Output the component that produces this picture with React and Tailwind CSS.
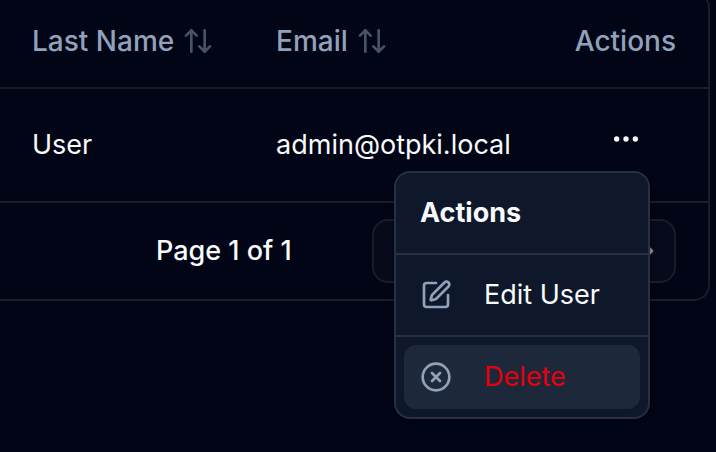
// USERS TABLE - Sortable user list with pagination and the row actions menu

import React from "react";
import {
  ArrowUpDown,
  ChevronLeft,
  ChevronRight,
  ChevronsLeft,
  ChevronsRight,
  CircleX,
  MoreHorizontal,
  SquarePen,
} from "lucide-react";

/**
 * SortHeader Component
 * @param {String} label - Column title, shown next to the sort arrows
 */
const SortHeader = ({ label }) => (
  <button type="button" className="flex items-center gap-2 font-medium">
    {label}
    <ArrowUpDown className="size-8 opacity-50" />
  </button>
);

/**
 * MenuItem Component
 * @param {Component} icon    - Lucide icon
 * @param {String}  label     - Item text
 * @param {Boolean} isActive  - Whether the item is highlighted
 * @param {Boolean} isDanger  - Whether the action is destructive
 */
const MenuItem = ({ icon: Icon, label, isActive = false, isDanger = false }) => (
  <div className="p-2">
    <button
      type="button"
      role="menuitem"
      className={`
        flex w-full items-center gap-8 rounded-xl px-4 py-3
        ${isActive ? "bg-[#1d293b]" : ""}
        ${isDanger ? "text-[#e7000b]" : "text-slate-50"}
      `}
    >
      <Icon className="size-8 text-slate-400" />
      {label}
    </button>
  </div>
);

/* Row actions menu, hangs from the "..." button */
const ActionsMenu = () => (
  <div
    role="menu"
    className="absolute top-full right-0 z-10 w-64 divide-y-2 divide-[#272f40] rounded-2xl border-2 border-[#272f40] bg-[#0f172b] text-left shadow-md"
  >
    <div className="px-6 py-5 font-bold">Actions</div>
    <MenuItem icon={SquarePen} label="Edit User" />
    <MenuItem icon={CircleX} label="Delete" isActive isDanger />
  </div>
);

const PageButton = ({ icon: Icon, label }) => (
  <button
    type="button"
    aria-label={label}
    disabled
    className="flex size-16 items-center justify-center rounded-2xl border-2 border-[#1a1c2c] bg-[#070a1a] text-slate-50/50"
  >
    <Icon className="size-8" />
  </button>
);

const Pagination = () => (
  <div className="flex items-center justify-between py-4 pr-8 pl-39">
    <span className="font-medium">Page 1 of 1</span>
    <div className="flex gap-4">
      <PageButton icon={ChevronsLeft} label="First page" />
      <PageButton icon={ChevronLeft} label="Previous page" />
      <PageButton icon={ChevronRight} label="Next page" />
      <PageButton icon={ChevronsRight} label="Last page" />
    </div>
  </div>
);

const App = () => {
  return (
    <main className="flow-root min-h-screen bg-[#020516] pr-1.5 font-['Inter','Liberation_Sans',sans-serif] text-[27px] leading-10 text-slate-50">
      <div className="-mt-2 rounded-r-2xl border-2 border-l-0 border-[#1a1c2c]">
        <table className="w-full text-left whitespace-nowrap">
          <thead className="border-b-2 border-[#1a1c2c] text-[28px] text-slate-400">
            <tr>
              <th className="h-[94px] w-[246px] pr-4 pl-8">
                <SortHeader label="Last Name" />
              </th>
              <th className="px-8">
                <SortHeader label="Email" />
              </th>
              <th className="px-8 text-right font-medium">Actions</th>
            </tr>
          </thead>
          <tbody className="border-b-2 border-[#1a1c2c]">
            <tr>
              <td className="px-8 py-9">User</td>
              <td className="px-8 py-9">admin@otpki.local</td>
              <td className="px-8 align-top">
                <div className="relative mt-4.5 mr-6.5 flex justify-end">
                  <button
                    type="button"
                    aria-label="Open menu"
                    className="flex h-16 w-12 items-center justify-center"
                  >
                    <MoreHorizontal className="size-8" />
                  </button>
                  <ActionsMenu />
                </div>
              </td>
            </tr>
          </tbody>
        </table>
        <Pagination />
      </div>
    </main>
  );
};

export default App;
